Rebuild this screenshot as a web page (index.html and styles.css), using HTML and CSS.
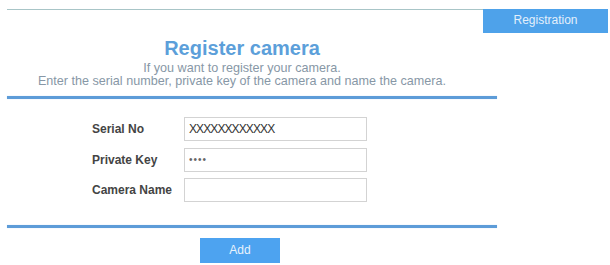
FILE: index.html
```html
<!DOCTYPE html>
<html>
<head>
<meta charset="utf-8">
<link rel="stylesheet" href="styles.css">
</head>
<body>
<div class="top">
  <div class="topline"></div>
  <div class="reg">Registration</div>
</div>
<div class="content">
  <div class="head">
    <h1 class="title">Register camera</h1>
    <p class="sub">If you want to register your camera.</p>
    <p class="sub">Enter the serial number, private key of the camera and name the camera.</p>
  </div>
  <div class="rule"></div>
  <div class="form">
    <div class="row">
      <label class="lbl">Serial No</label>
      <div class="field xs">XXXXXXXXXXXX</div>
    </div>
    <div class="row">
      <label class="lbl">Private Key</label>
      <div class="field dots">&#8226;&#8226;&#8226;&#8226;</div>
    </div>
    <div class="row">
      <label class="lbl">Camera Name</label>
      <div class="field"></div>
    </div>
  </div>
  <div class="rule rule2"></div>
  <div class="actions">
    <div class="add">Add</div>
  </div>
</div>
</body>
</html>
```

FILE: styles.css
```css
html, body {
  margin: 0;
  padding: 0;
  background: #ffffff;
  font-family: "Liberation Sans", Arial, sans-serif;
}
.top {
  display: flex;
  margin-top: 9px;
  padding-left: 7px;
  height: 24px;
}
.topline {
  flex: 1;
  border-top: 1px solid #a8c5c7;
}
.reg {
  width: 125px;
  height: 24px;
  margin-right: 2px;
  background: #4ea2ea;
  color: #e3effb;
  font-size: 12px;
  line-height: 23px;
  text-align: center;
}
.content {
  margin-left: 7px;
  width: 490px;
}
.head {
  padding-right: 20px;
  text-align: center;
}
.title {
  margin: 3px 0 0;
  font-size: 20px;
  line-height: 24px;
  font-weight: bold;
  color: #5c9fda;
}
.sub {
  margin: 0;
  font-size: 12.6px;
  line-height: 12px;
  color: #8797a6;
}
.sub:first-of-type {
  margin-top: 2px;
}
.sub + .sub {
  margin-top: 1px;
}
.rule {
  margin-top: 9px;
  height: 3px;
  background: #5d9cd8;
  box-shadow: 0 0 1px #a9cbef;
}
.form {
  padding: 18px 0 0 85px;
  display: flex;
  flex-direction: column;
  gap: 6.5px;
}
.row {
  display: flex;
  align-items: center;
}
.lbl {
  width: 92px;
  font-size: 12px;
  font-weight: bold;
  color: #444;
}
.field {
  box-sizing: border-box;
  width: 183px;
  height: 24px;
  border: 1px solid #d3d3d3;
  background: #fff;
  padding-left: 4px;
  font-size: 12px;
  line-height: 22px;
  color: #333;
}
.xs {
  letter-spacing: -0.9px;
}
.dots {
  font-size: 10px;
  letter-spacing: 1px;
  color: #666;
}
.rule2 {
  margin-top: 23px;
}
.actions {
  padding: 10px 0 0 193px;
}
.add {
  width: 80px;
  height: 25px;
  background: #4da3f0;
  color: #e8f2fc;
  font-size: 12px;
  line-height: 25px;
  text-align: center;
}
```
